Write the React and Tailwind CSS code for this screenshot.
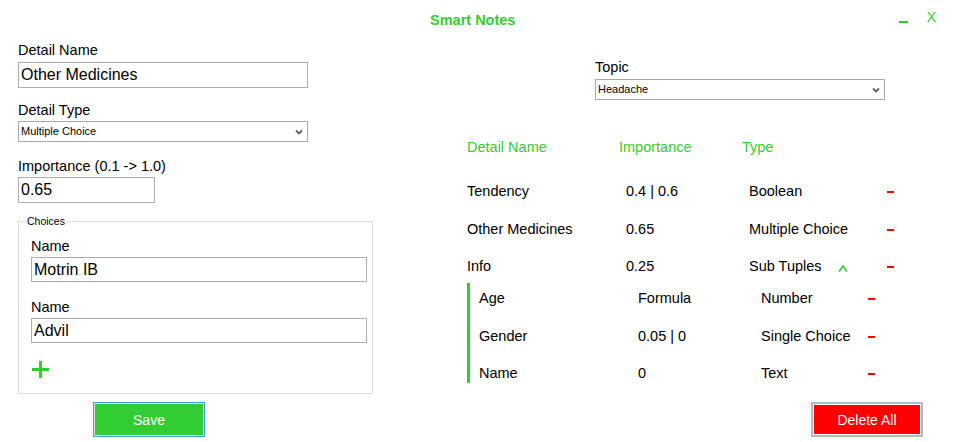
const GREEN = 'text-[#32cd32]'

function Minus() {
  return <div className="mt-[8px] h-[2px] w-[7px] bg-[#ff0000]" />
}

function Chevron() {
  return (
    <svg width="8" height="6" viewBox="0 0 8 6" className="shrink-0">
      <polyline points="1,1.5 4,4.5 7,1.5" fill="none" stroke="#606060" strokeWidth="1.8" />
    </svg>
  )
}

function FakeSelect({ value, width }) {
  return (
    <div className={`flex h-[21px] ${width} items-center justify-between border border-[#a9a9a9] bg-white pl-[2px] pr-[4px]`}>
      <span className="text-[11px] leading-[13px] text-black">{value}</span>
      <Chevron />
    </div>
  )
}

function Field({ value, className }) {
  return (
    <input
      readOnly
      value={value}
      className={`block border border-[#adadad] bg-white px-[2px] text-[16px] leading-[18px] text-black outline-none ${className}`}
    />
  )
}

const rows = [
  { name: 'Tendency', imp: '0.4 | 0.6', type: 'Boolean', gap: 'mt-[28px]' },
  { name: 'Other Medicines', imp: '0.65', type: 'Multiple Choice', gap: 'mt-[22px]' },
  { name: 'Info', imp: '0.25', type: 'Sub Tuples', gap: 'mt-[21px]', sub: true },
]

const subRows = [
  { name: 'Age', imp: 'Formula', type: 'Number', gap: 'mt-0' },
  { name: 'Gender', imp: '0.05 | 0', type: 'Single Choice', gap: 'mt-[22px]' },
  { name: 'Name', imp: '0', type: 'Text', gap: 'mt-[21px]' },
]

export default function App() {
  return (
    <div className="flex h-[442px] w-[962px] flex-col overflow-hidden bg-white font-['Liberation_Sans',Arial,sans-serif] text-black">
      {/* Title bar */}
      <div className="flex h-[28px] shrink-0 items-start">
        <span className={`ml-[430px] mt-[12px] text-[14.5px] font-bold leading-[16px] ${GREEN}`}>Smart Notes</span>
        <div className="ml-auto mr-[26px] flex items-start">
          <div className="mt-[21px] h-[2px] w-[9px] bg-[#32cd32]" />
          <span className={`ml-[19px] mt-[9px] text-[14px] leading-[16px] ${GREEN}`}>X</span>
        </div>
      </div>

      <div className="flex flex-1">
        {/* Left form */}
        <div className="flex w-[373px] shrink-0 flex-col pl-[18px] pt-[14px] text-[14.5px] leading-[16px]">
          <span>Detail Name</span>
          <Field value="Other Medicines" className="mt-[4px] h-[26px] w-[290px]" />
          <span className="mt-[14px]">Detail Type</span>
          <div className="mt-[3px]">
            <FakeSelect value="Multiple Choice" width="w-[290px]" />
          </div>
          <span className="mt-[16px]">Importance (0.1 -&gt; 1.0)</span>
          <Field value="0.65" className="mt-[3px] h-[26px] w-[137px]" />

          <div className="relative mt-[18px] flex w-[355px] flex-col border border-[#dcdcdc] pb-[15px] pl-[12px] pr-[5px] pt-[16px]">
            <span className="absolute left-[7px] top-[-7px] bg-white px-[1px] text-[10.5px] leading-[12px]">Choices</span>
            <span>Name</span>
            <Field value="Motrin IB" className="mt-[3px] h-[25px] w-full" />
            <span className="mt-[17px]">Name</span>
            <Field value="Advil" className="mt-[3px] h-[25px] w-full" />
            <svg width="17" height="17" viewBox="0 0 17 17" className="ml-[1px] mt-[18px]">
              <rect x="7" y="0" width="3" height="17" fill="#32cd32" />
              <rect x="0" y="7" width="17" height="3" fill="#32cd32" />
            </svg>
          </div>

          <button className="ml-[75px] mt-[8px] flex h-[35px] w-[112px] border border-[#3c9bf0] bg-[#e3e3e3] p-[1px]">
            <span className="flex flex-1 items-center justify-center bg-[#32cd32] text-[14px] text-white">Save</span>
          </button>
        </div>

        {/* Right side */}
        <div className="ml-[94px] flex flex-1 flex-col text-[14.5px] leading-[16px]">
          <div className="ml-[128px] flex flex-col pt-[31px]">
            <span>Topic</span>
            <div className="mt-[4px]">
              <FakeSelect value="Headache" width="w-[290px]" />
            </div>
          </div>

          <div className={`mt-[39px] flex ${GREEN}`}>
            <span className="w-[152px]">Detail Name</span>
            <span className="w-[123px]">Importance</span>
            <span>Type</span>
          </div>

          {rows.map((r) => (
            <div key={r.name} className={`flex ${r.gap}`}>
              <span className="w-[159px]">{r.name}</span>
              <span className="w-[123px]">{r.imp}</span>
              <div className="flex w-[138px] items-start">
                <span>{r.type}</span>
                {r.sub && (
                  <svg width="10" height="7" viewBox="0 0 10 7" className="ml-[16px] mt-[7px]">
                    <polyline points="1,6.5 5,1 9,6.5" fill="none" stroke="#32cd32" strokeWidth="1.6" />
                  </svg>
                )}
              </div>
              <Minus />
            </div>
          ))}

          <div className="mt-[9px] flex flex-col border-l-[3px] border-[#32cd32] pb-[2px] pl-[9px] pt-[7px]">
            {subRows.map((r) => (
              <div key={r.name} className={`flex ${r.gap}`}>
                <span className="w-[159px]">{r.name}</span>
                <span className="w-[123px]">{r.imp}</span>
                <span className="w-[107px]">{r.type}</span>
                <Minus />
              </div>
            ))}
          </div>

          <button className="ml-[344px] mt-[19px] flex h-[35px] w-[112px] border-2 border-[#b9b9b9] bg-white p-[1px]">
            <span className="flex flex-1 items-center justify-center bg-[#ff0000] text-[14px] text-white">Delete All</span>
          </button>
        </div>
      </div>
    </div>
  )
}
